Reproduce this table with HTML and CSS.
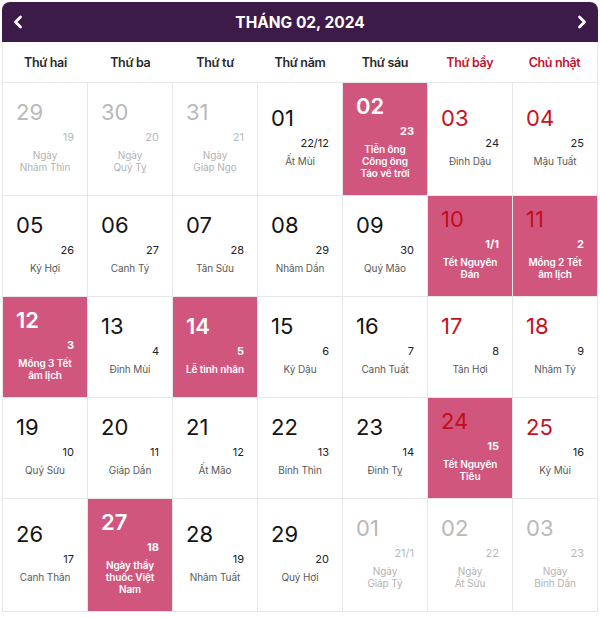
FILE: index.html
```html
<!DOCTYPE html>
<html lang="vi">
<head>
<meta charset="utf-8">
<title>Lịch tháng 02, 2024</title>
<link rel="stylesheet" href="styles.css">
</head>
<body>
<div class="cal">
  <div class="head">
    <span class="nav"><svg width="10" height="14" viewBox="0 0 10 14"><polyline points="7.5,2 2.5,7 7.5,12" fill="none" stroke="#fff" stroke-width="2.8" stroke-linecap="round" stroke-linejoin="round"/></svg></span>
    <h1 class="title">THÁNG 02, 2024</h1>
    <span class="nav"><svg width="10" height="14" viewBox="0 0 10 14"><polyline points="2.5,2 7.5,7 2.5,12" fill="none" stroke="#fff" stroke-width="2.8" stroke-linecap="round" stroke-linejoin="round"/></svg></span>
  </div>
  <div class="box">
    <div class="week">
      <div>Thứ hai</div><div>Thứ ba</div><div>Thứ tư</div><div>Thứ năm</div><div>Thứ sáu</div><div class="we">Thứ bẩy</div><div class="we">Chủ nhật</div>
    </div>
    <div class="grid">
      <div class="cell off"><div class="num">29</div><div class="lun">19</div><div class="txt">Ngày<br>Nhâm Thìn</div></div>
      <div class="cell off"><div class="num">30</div><div class="lun">20</div><div class="txt">Ngày<br>Quý Tỵ</div></div>
      <div class="cell off"><div class="num">31</div><div class="lun">21</div><div class="txt">Ngày<br>Giáp Ngọ</div></div>
      <div class="cell"><div class="num">01</div><div class="lun">22/12</div><div class="txt">Ất Mùi</div></div>
      <div class="cell ev"><div class="num">02</div><div class="lun">23</div><div class="txt">Tiễn ông<br>Công ông<br>Táo về trời</div></div>
      <div class="cell red"><div class="num">03</div><div class="lun">24</div><div class="txt">Đinh Dậu</div></div>
      <div class="cell red"><div class="num">04</div><div class="lun">25</div><div class="txt">Mậu Tuất</div></div>

      <div class="cell"><div class="num">05</div><div class="lun">26</div><div class="txt">Kỷ Hợi</div></div>
      <div class="cell"><div class="num">06</div><div class="lun">27</div><div class="txt">Canh Tý</div></div>
      <div class="cell"><div class="num">07</div><div class="lun">28</div><div class="txt">Tân Sửu</div></div>
      <div class="cell"><div class="num">08</div><div class="lun">29</div><div class="txt">Nhâm Dần</div></div>
      <div class="cell"><div class="num">09</div><div class="lun">30</div><div class="txt">Quý Mão</div></div>
      <div class="cell ev red"><div class="num">10</div><div class="lun">1/1</div><div class="txt">Tết Nguyên<br>Đán</div></div>
      <div class="cell ev red"><div class="num">11</div><div class="lun">2</div><div class="txt">Mồng 2 Tết<br>âm lịch</div></div>

      <div class="cell ev"><div class="num">12</div><div class="lun">3</div><div class="txt">Mồng 3 Tết<br>âm lịch</div></div>
      <div class="cell"><div class="num">13</div><div class="lun">4</div><div class="txt">Đinh Mùi</div></div>
      <div class="cell ev"><div class="num">14</div><div class="lun">5</div><div class="txt">Lễ tình nhân</div></div>
      <div class="cell"><div class="num">15</div><div class="lun">6</div><div class="txt">Kỷ Dậu</div></div>
      <div class="cell"><div class="num">16</div><div class="lun">7</div><div class="txt">Canh Tuất</div></div>
      <div class="cell red"><div class="num">17</div><div class="lun">8</div><div class="txt">Tân Hợi</div></div>
      <div class="cell red"><div class="num">18</div><div class="lun">9</div><div class="txt">Nhâm Tý</div></div>

      <div class="cell"><div class="num">19</div><div class="lun">10</div><div class="txt">Quý Sửu</div></div>
      <div class="cell"><div class="num">20</div><div class="lun">11</div><div class="txt">Giáp Dần</div></div>
      <div class="cell"><div class="num">21</div><div class="lun">12</div><div class="txt">Ất Mão</div></div>
      <div class="cell"><div class="num">22</div><div class="lun">13</div><div class="txt">Bính Thìn</div></div>
      <div class="cell"><div class="num">23</div><div class="lun">14</div><div class="txt">Đinh Tỵ</div></div>
      <div class="cell ev red"><div class="num">24</div><div class="lun">15</div><div class="txt">Tết Nguyên<br>Tiêu</div></div>
      <div class="cell red"><div class="num">25</div><div class="lun">16</div><div class="txt">Kỷ Mùi</div></div>

      <div class="cell"><div class="num">26</div><div class="lun">17</div><div class="txt">Canh Thân</div></div>
      <div class="cell ev"><div class="num">27</div><div class="lun">18</div><div class="txt">Ngày thầy<br>thuốc Việt<br>Nam</div></div>
      <div class="cell"><div class="num">28</div><div class="lun">19</div><div class="txt">Nhâm Tuất</div></div>
      <div class="cell"><div class="num">29</div><div class="lun">20</div><div class="txt">Quý Hợi</div></div>
      <div class="cell off"><div class="num">01</div><div class="lun">21/1</div><div class="txt">Ngày<br>Giáp Tý</div></div>
      <div class="cell off"><div class="num">02</div><div class="lun">22</div><div class="txt">Ngày<br>Ất Sửu</div></div>
      <div class="cell off"><div class="num">03</div><div class="lun">23</div><div class="txt">Ngày<br>Bính Dần</div></div>
    </div>
  </div>
</div>
</body>
</html>
```
FILE: styles.css
```css
* { box-sizing: border-box; }
html, body { margin: 0; padding: 0; background: #fff; }
body { font-family: Inter, "Noto Sans", sans-serif; color: #111; }

.cal { width: 596px; margin: 2px; }

.head {
  height: 40px;
  background: #3c1b49;
  border-radius: 8px 8px 0 0;
  display: flex;
  align-items: center;
  justify-content: space-between;
  padding: 0 11px;
}
.nav { display: flex; width: 10px; height: 14px; }
.title {
  margin: 0;
  color: #fff;
  font-size: 15.5px;
  font-weight: 700;
  letter-spacing: 0;
}

.box {
  border: 1px solid #e7e7e7;
  border-top: none;
}

.week {
  display: grid;
  grid-template-columns: repeat(7, 1fr);
  height: 41px;
  align-items: center;
  border-bottom: 1px solid #e7e7e7;
  font-size: 12.5px;
  font-weight: 600;
  letter-spacing: -0.35px;
  color: #2a2a2a;
  text-align: center;
}
.week .we { color: #c8102e; }

.grid {
  display: grid;
  grid-template-columns: repeat(7, 1fr);
  gap: 1px;
  background: #e7e7e7;
}

.cell {
  background: #fff;
  display: flex;
  flex-direction: column;
  justify-content: center;
  padding: 10px 13px 16px;
}
.num {
  font-size: 22px;
  line-height: 26px;
  font-weight: 400;
  color: #141414;
}
.lun {
  margin-top: 5px;
  font-size: 11px;
  line-height: 14px;
  text-align: right;
  color: #222;
}
.txt {
  margin-top: 5px;
  font-size: 10px;
  line-height: 12px;
  text-align: center;
  color: #5a5a5a;
  letter-spacing: -0.1px;
}

.off .num, .off .lun { color: #b9b9b9; }
.off .txt { color: #b3b3b3; }

.red .num { color: #c8101e; }

.ev { background: #d1567e; }
.ev .num { color: #fff; font-weight: 600; }
.ev .lun { color: #fff; font-weight: 700; }
.ev .txt { color: #fff; font-weight: 600; }
.ev.red .num { color: #c40d1a; font-weight: 400; }
```
